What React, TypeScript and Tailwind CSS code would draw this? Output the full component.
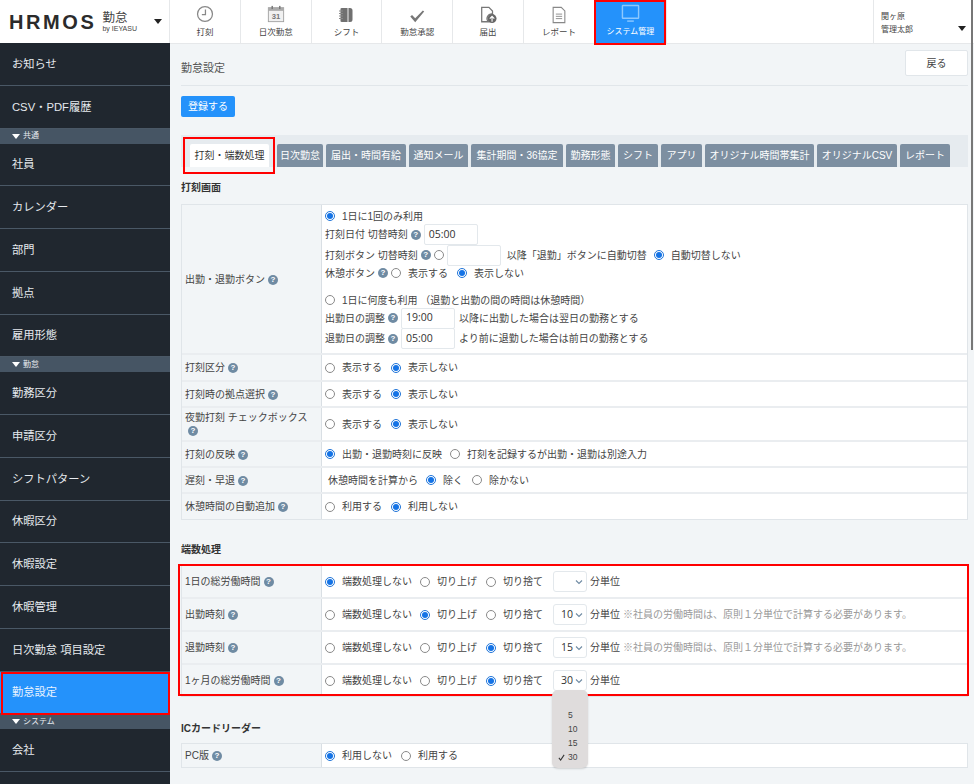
import React from "react";

const font = { fontFamily: '"Liberation Sans","Noto Sans CJK JP",sans-serif' };

function Q() {
  return (
    <span className="inline-flex w-[10px] h-[10px] rounded-full bg-[#6f8ba3] text-white text-[8px] font-bold items-center justify-center leading-none mx-[3px] align-middle shrink-0">?</span>
  );
}
function R({ on, label, className = "" }: { on?: boolean; label?: string; className?: string }) {
  return (
    <span className={"inline-flex items-center whitespace-nowrap " + className}>
      <span className={"w-[10px] h-[10px] rounded-full border shrink-0 flex items-center justify-center bg-white " + (on ? "border-[#1f74d8]" : "border-[#8a8a8a]")}>
        {on && <span className="w-[6px] h-[6px] rounded-full bg-[#1473e6]" />}
      </span>
      {label && <span className="ml-[7px]">{label}</span>}
    </span>
  );
}
function Inp({ v, w = "w-[54px]" }: { v?: string; w?: string }) {
  return <span className={"inline-flex items-center h-[21px] bg-white border border-[#e3e8ec] rounded-[2px] pl-[4px] font-['Open_Sans'] text-[10.5px] text-[#333] shrink-0 " + w}>{v}</span>;
}
function Sel({ v }: { v?: string }) {
  return (
    <span className="relative inline-flex items-center w-[34px] h-[21px] bg-white border border-[#e3e8ec] rounded-[3px] font-['Open_Sans'] text-[10.5px] pl-[7px] shrink-0 text-[#333]">
      {v}
      <svg className="absolute right-[3px] top-[7px]" width="8" height="6" viewBox="0 0 8 6" fill="none"><path d="M1 1.5 4 4.5 7 1.5" stroke="#6f8ba3" strokeWidth="1.1" /></svg>
    </span>
  );
}
function Row({ label, h, children, last }: { label: React.ReactNode; h: string; children: React.ReactNode; last?: boolean }) {
  return (
    <div className={"flex " + h + (last ? "" : " border-b-2 border-[#eaedf0]")}>
      <div className="w-[140px] shrink-0 bg-[#f2f5f7] border-r border-[#d9dfe4] pl-[3px] flex items-center leading-[13px]">{label}</div>
      <div className="flex-1 bg-white pl-[3px] flex items-center min-w-0">{children}</div>
    </div>
  );
}
function Heading({ children, className = "" }: { children: React.ReactNode; className?: string }) {
  return <div className={"text-[10px] font-bold text-[#333] leading-[14px] " + className}>{children}</div>;
}
function Round({ label, a, last, v, note }: { label: string; a: number; last?: boolean; v?: string; note?: boolean }) {
  return (
    <Row label={<span>{label}<Q /></span>} h={last ? "h-[31px]" : "h-[33px]"} last={last}>
      <R on={a === 0} label="端数処理しない" className="w-[95px]" />
      <R on={a === 1} label="切り上げ" className="w-[66px]" />
      <R on={a === 2} label="切り捨て" className="w-[67px]" />
      <Sel v={v} />
      <span className="ml-[3px]">分単位</span>
      {note && <span className="ml-[3px] text-[#999] whitespace-nowrap">※社員の労働時間は、原則１分単位で計算する必要があります。</span>}
    </Row>
  );
}

const Clock = () => (
  <svg width="18" height="18" viewBox="0 0 20 20" fill="none"><circle cx="10" cy="10" r="8.300" stroke="#888" strokeWidth="1.400" /><path d="M10.500 5v5.800H6.500" stroke="#888" strokeWidth="1.400" /></svg>
);
const Cal = () => (
  <svg width="18" height="18" viewBox="0 0 20 20" fill="none"><rect x="1.500" y="3" width="17" height="15.500" fill="#f1f1f1" stroke="#a0a0a0" /><rect x="1.500" y="3" width="17" height="3.500" fill="#aaa" /><rect x="5" y="1" width="1.600" height="3.500" fill="#777" /><rect x="13.400" y="1" width="1.600" height="3.500" fill="#777" /><text x="10" y="15.500" textAnchor="middle" fontSize="8.500" fontWeight="bold" fill="#777" fontFamily="Liberation Sans">31</text></svg>
);
const Note = () => (
  <svg width="18" height="18" viewBox="0 0 18 18" fill="none" className="mt-[3px]"><path d="M5 2h8a2.500 2.500 0 0 1 2.500 2.500v9A2.500 2.500 0 0 1 13 16H5z" fill="#707070" /><rect x="3.500" y="2" width="2" height="14" rx="1" fill="#707070" /><path d="M2 5h4M2 7.500h4M2 10h4M2 12.500h4" stroke="#8a8a8a" strokeWidth="1.100" /><path d="M11 2v14" stroke="#fff" strokeWidth=".9" /></svg>
);
const Check = () => (
  <svg width="18" height="18" viewBox="0 0 20 20" fill="none" className="mt-[4px]"><path d="M2.500 10.500l2-1.500 3.500 3.500L16.500 4l1.500 1L8 17z" fill="#777" /></svg>
);
const Upload = () => (
  <svg width="18" height="18" viewBox="0 0 20 20" fill="none" className="mt-[3px]"><path d="M3 1.500h8l4 4v3.500a5 5 0 0 0-4.500 8.500H3z" fill="#fff" stroke="#777" strokeWidth="1.400" /><circle cx="14.500" cy="14" r="5" fill="#666" /><path d="M14.500 17.500v-6M12 14l2.500-2.500L17 14" stroke="#fff" strokeWidth="1.200" /></svg>
);
const Doc = () => (
  <svg width="18" height="18" viewBox="0 0 20 20" fill="none" className="mt-[3px]"><path d="M3.500 1.500h9l4 4V18.500h-13z" fill="#fff" stroke="#888" strokeWidth="1.200" /><path d="M6.500 9h7M6.500 11.500h7M6.500 14h7" stroke="#888" strokeWidth="1" /></svg>
);
const Monitor = () => (
  <svg width="19" height="19" viewBox="0 0 20 20" fill="none"><rect x="1.500" y="1.500" width="17" height="13.500" rx=".5" stroke="#8cc8ff" strokeWidth="1.500" /><path d="M6.500 18h7" stroke="#8cc8ff" strokeWidth="1.500" /></svg>
);

function Nav({ icon, label, active }: { icon: React.ReactNode; label: string; active?: boolean }) {
  return (
    <div className={"relative h-[43px] flex flex-col items-center border-r border-[#e6e8ea] pt-[3px] " + (active ? "w-[72px] bg-[#2492fb] text-white text-[8px]" : "w-[70.8px] text-[#444] text-[8.5px]")}>
      <div className="h-[21px] flex items-center">{icon}</div>
      <div className="leading-[12px] mt-[2px]">{label}</div>
      {active && <div className="absolute -top-[0px] -left-[1px] right-0 -bottom-[2px] border-[2px] border-[#f00]" />}
    </div>
  );
}
function Side({ label, active }: { label: string; active?: boolean }) {
  return (
    <div className={"relative h-[42.75px] flex items-center pl-[12px] pt-[1px] text-[11.25px] border-b border-[#4a5866] shrink-0 " + (active ? "bg-[#2492fb] text-[#e8f3ff]" : "text-[#e6eaee]")}>
      {label}
      {active && <div className="absolute left-[1px] right-[0px] top-0 -bottom-[2px] border-[2px] border-[#f00]" />}
    </div>
  );
}
function SideHead({ label }: { label: string }) {
  return (
    <div className="h-[15px] bg-[#465564] text-[#e6eaee] text-[8px] flex items-center pl-[12px] shrink-0">
      <span className="mr-[3px] w-0 h-0 border-l-[4px] border-r-[4px] border-t-[5px] border-l-transparent border-r-transparent border-t-white" />
      {label}
    </div>
  );
}
function Tab({ label, w, active }: { label: string; w: string; active?: boolean }) {
  return (
    <div className={"h-[23px] rounded-t-[2px] flex items-center justify-center text-[10px] whitespace-nowrap shrink-0 " + w + (active ? " bg-white text-[#333]" : " bg-[#7d8fa1] text-white")}>{label}</div>
  );
}

export default function App() {
  return (
    <div style={font} className="w-[974px] h-[784px] overflow-hidden flex flex-col bg-[#f2f5f7] text-[#444] text-[10px] relative">
      <header className="h-[43px] flex bg-white shrink-0">
        <div className="w-[170px] border-r border-[#e6e8ea] flex items-center pl-[9px] relative">
          <span className="text-[20px] font-bold tracking-[2.6px] text-[#2b2b2b] leading-none">HRMOS</span>
          <span className="ml-[6px] flex flex-col items-start">
            <span className="text-[12.5px] leading-[14px] text-[#444]">勤怠</span>
            <span className="text-[7px] leading-[8px] text-[#444]">by IEYASU</span>
          </span>
          <span className="absolute right-[7px] top-[19px] w-0 h-0 border-l-[4px] border-r-[4px] border-t-[5px] border-l-transparent border-r-transparent border-t-[#222]" />
        </div>
        <Nav icon={<Clock />} label="打刻" />
        <Nav icon={<Cal />} label="日次勤怠" />
        <Nav icon={<Note />} label="シフト" />
        <Nav icon={<Check />} label="勤怠承認" />
        <Nav icon={<Upload />} label="届出" />
        <Nav icon={<Doc />} label="レポート" />
        <Nav icon={<Monitor />} label="システム管理" active />
        <div className="flex-1" />
        <div className="w-[98px] border-l border-[#e6e8ea] pl-[7px] pt-[11px] text-[8px] leading-[12.500px] relative text-[#444] mr-[3px]">
          <div>関ヶ原</div>
          <div>管理太郎</div>
          <span className="absolute right-[5px] top-[26px] w-0 h-0 border-l-[4px] border-r-[4px] border-t-[5px] border-l-transparent border-r-transparent border-t-[#222]" />
        </div>
      </header>

      <div className="flex flex-1 min-h-0">
        <aside className="w-[170px] bg-[#20272f] shrink-0 flex flex-col overflow-hidden">
          <Side label="お知らせ" />
          <Side label="CSV・PDF履歴" />
          <SideHead label="共通" />
          <Side label="社員" />
          <Side label="カレンダー" />
          <Side label="部門" />
          <Side label="拠点" />
          <Side label="雇用形態" />
          <SideHead label="勤怠" />
          <Side label="勤務区分" />
          <Side label="申請区分" />
          <Side label="シフトパターン" />
          <Side label="休暇区分" />
          <Side label="休暇設定" />
          <Side label="休暇管理" />
          <Side label="日次勤怠 項目設定" />
          <Side label="勤怠設定" active />
          <SideHead label="システム" />
          <Side label="会社" />
        </aside>

        <main className="flex-1 min-w-0 pl-[11px] pr-[6px] border-t border-[#e6e8ea]">
          <div className="flex items-center justify-between h-[42px] border-b border-[#e1e6ea] pt-[3px]">
            <div className="text-[11px] text-[#555] mt-[5px]">勤怠設定</div>
            <div className="w-[63px] h-[26px] bg-white border border-[#e1e6ea] rounded-[2px] flex items-center justify-center text-[10px] text-[#444] mb-[6px]">戻る</div>
          </div>
          <div className="mt-[10px] w-[54px] h-[21px] bg-[#2492fb] rounded-[2px] text-white text-[10px] flex items-center justify-center">登録する</div>

          <div className="mt-[18px] h-[32px] bg-[#e6ebef] pl-[9px] flex items-end gap-[3px]">
            <div className="relative">
              <Tab label="打刻・端数処理" w="w-[79px] mr-[5px]" active />
              <div className="absolute -left-[7px] -right-[1px] -top-[7px] -bottom-[7px] border-[2px] border-[#f00]" />
            </div>
            <Tab label="日次勤怠" w="w-[46px]" />
            <Tab label="届出・時間有給" w="w-[80px]" />
            <Tab label="通知メール" w="w-[59px]" />
            <Tab label="集計期間・36協定" w="w-[92px]" />
            <Tab label="勤務形態" w="w-[49px]" />
            <Tab label="シフト" w="w-[40px]" />
            <Tab label="アプリ" w="w-[41px]" />
            <Tab label="オリジナル時間帯集計" w="w-[109px]" />
            <Tab label="オリジナルCSV" w="w-[80px]" />
            <Tab label="レポート" w="w-[50px]" />
          </div>

          <Heading className="mt-[14px]">打刻画面</Heading>
          <div className="mt-[9px] border border-[#e0e5e9]">
            <Row label={<span>出勤・退勤ボタン<Q /></span>} h="h-[150px]">
              <div className="flex flex-col h-full pt-[3px]">
                <R on label="1日に1回のみ利用" className="h-[16px]" />
                <div className="flex items-center h-[21px]">打刻日付 切替時刻<Q /><Inp v="05:00" /></div>
                <div className="flex items-center h-[20px]">打刻ボタン 切替時刻<Q /><R /><span className="w-[3px]" /><Inp />
                  <span className="ml-[6px]">以降「退勤」ボタンに自動切替</span><R on label="自動切替しない" className="ml-[7px]" />
                </div>
                <div className="flex items-center h-[16px]">休憩ボタン<Q /><R label="表示する" /><R on label="表示しない" className="ml-[9px]" /></div>
                <div className="h-[11px]" />
                <R label="1日に何度も利用 （退勤と出勤の間の時間は休憩時間）" className="h-[16px]" />
                <div className="flex items-center h-[20px]">出勤日の調整<Q /><Inp v="19:00" /><span className="ml-[4px]">以降に出勤した場合は翌日の勤務とする</span></div>
                <div className="flex items-center h-[21px]">退勤日の調整<Q /><Inp v="05:00" /><span className="ml-[4px]">より前に退勤した場合は前日の勤務とする</span></div>
              </div>
            </Row>
            <Row label={<span>打刻区分<Q /></span>} h="h-[27px]"><R label="表示する" className="w-[66px]" /><R on label="表示しない" /></Row>
            <Row label={<span>打刻時の拠点選択<Q /></span>} h="h-[26px]"><R label="表示する" className="w-[66px]" /><R on label="表示しない" /></Row>
            <Row label={<span>夜勤打刻 チェックボックス<Q /></span>} h="h-[34px]"><R label="表示する" className="w-[66px]" /><R on label="表示しない" /></Row>
            <Row label={<span>打刻の反映<Q /></span>} h="h-[26px]"><R on label="出勤・退勤時刻に反映" className="w-[125px]" /><R label="打刻を記録するが出勤・退勤は別途入力" /></Row>
            <Row label={<span>遅刻・早退<Q /></span>} h="h-[26px]"><span className="ml-[3px] mr-[8px]">休憩時間を計算から</span><R on label="除く" className="w-[46px]" /><R label="除かない" /></Row>
            <Row label={<span>休憩時間の自動追加<Q /></span>} h="h-[25px]" last><R label="利用する" className="w-[66px]" /><R on label="利用しない" /></Row>
          </div>

          <Heading className="mt-[23px]">端数処理</Heading>
          <div className="relative mt-[8px] border border-[#e0e5e9]">
            <Round label="1日の総労働時間" a={0} />
            <Round label="出勤時刻" a={1} v="10" note />
            <Round label="退勤時刻" a={2} v="15" note />
            <Round label="1ヶ月の総労働時間" a={2} v="30" last />
            <div className="absolute -left-[4px] -right-[2px] -top-[2px] bottom-0 border-[2px] border-[#f00]" />
            <div className="absolute z-10 left-[370px] top-[124px] w-[36px] h-[78px] bg-[#dfdcdc] rounded-[6px] text-[8.5px] text-[#444] flex flex-col justify-end pb-[4px] leading-[14px] shadow-[0_1px_2px_rgba(0,0,0,.15)]">
              <div className="pl-[16px]">5</div>
              <div className="pl-[16px]">10</div>
              <div className="pl-[16px]">15</div>
              <div className="pl-[6px] flex items-center">
                <svg width="7" height="7" viewBox="0 0 8 8" fill="none" className="mr-[3px]"><path d="M1 4.500 3 7 7 1" stroke="#333" strokeWidth="1.200" /></svg>
                30
              </div>
            </div>
          </div>

          <Heading className="mt-[25px]">ICカードリーダー</Heading>
          <div className="mt-[7px] border border-[#e0e5e9]">
            <Row label={<span>PC版<Q /></span>} h="h-[23px]" last><R on label="利用しない" className="w-[76px]" /><R label="利用する" /></Row>
          </div>
        </main>
      </div>
      <div className="absolute top-0 right-[1px] w-[2px] h-[350px] bg-[#777]" />
    </div>
  );
}
